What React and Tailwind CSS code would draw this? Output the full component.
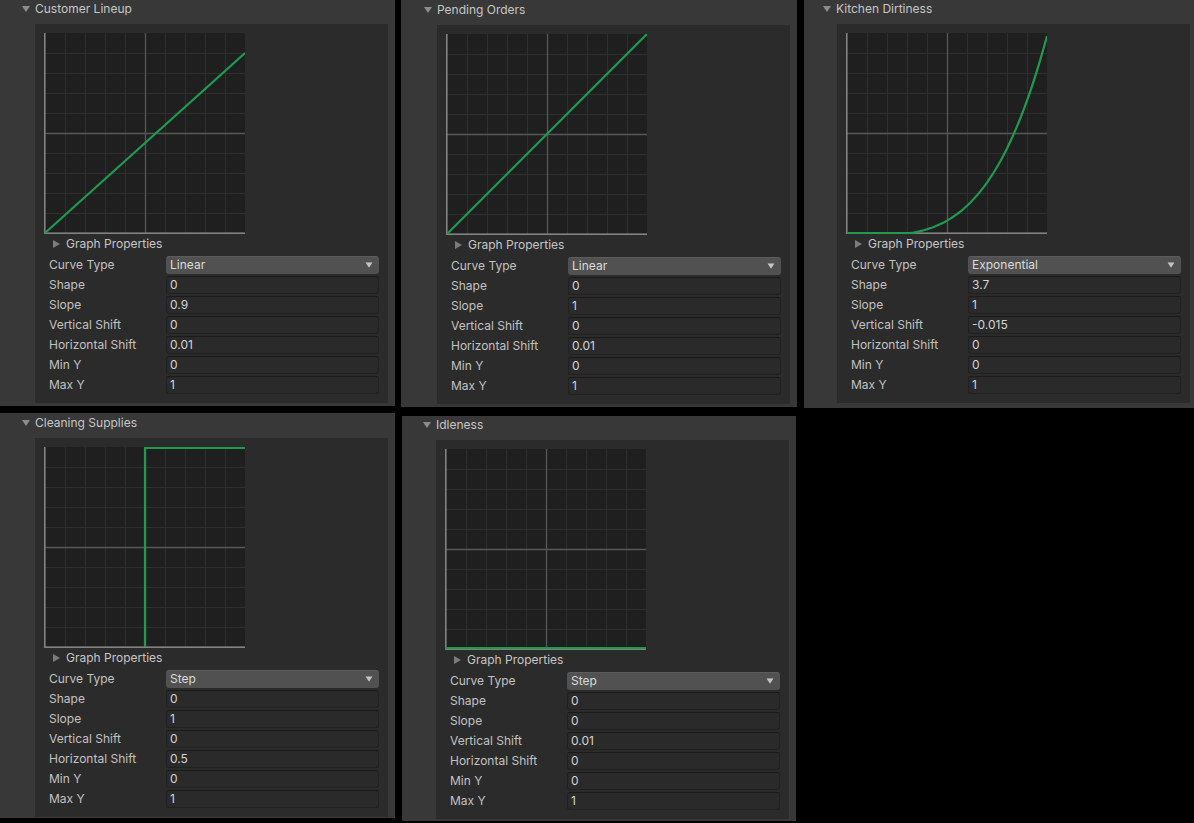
import React from "react";

const GRID = [20, 40, 60, 80, 120, 140, 160, 180];
const ROW_LABELS = ["Shape", "Slope", "Vertical Shift", "Horizontal Shift", "Min Y", "Max Y"];

// map curve space (0..1) to graph pixels
const px = (x) => 1 + x * 200;
const py = (y) => 200 - y * 200;

const expPath = () => {
  let d = "";
  for (let i = 0; i <= 60; i++) {
    const x = i / 60;
    const y = Math.min(1, Math.max(0, Math.pow(x, 3.7) - 0.015));
    d += (i === 0 ? "M" : "L") + px(x).toFixed(2) + "," + py(y).toFixed(2) + " ";
  }
  return d;
};

const panels = [
  {
    title: "Customer Lineup",
    curve: "Linear",
    values: ["0", "0.9", "0", "0.01", "0", "1"],
    path: `M${px(0)},${py(0)} L${px(1)},${py(0.9)}`,
  },
  {
    title: "Pending Orders",
    curve: "Linear",
    values: ["0", "1", "0", "0.01", "0", "1"],
    path: `M${px(0)},${py(0)} L${px(1)},${py(1)}`,
  },
  {
    title: "Kitchen Dirtiness",
    curve: "Exponential",
    values: ["3.7", "1", "-0.015", "0", "0", "1"],
    path: expPath(),
  },
  {
    title: "Cleaning Supplies",
    curve: "Step",
    values: ["0", "1", "0", "0.5", "0", "1"],
    path: `M${px(0.5)},200 L${px(0.5)},1 L201,1`,
  },
  {
    title: "Idleness",
    curve: "Step",
    values: ["0", "0", "0.01", "0", "0", "1"],
    path: `M0,199 L201,199`,
  },
];

const Graph = ({ path }) => (
  <svg width="201" height="201" viewBox="0 0 201 201" className="block">
    <rect x="0" y="0" width="201" height="201" fill="#1f1f1f" />
    {GRID.map((g) => (
      <line key={"v" + g} x1={g + 1.5} y1="0" x2={g + 1.5} y2="201" stroke="#2f2f2f" strokeWidth="1" />
    ))}
    {GRID.map((g) => (
      <line key={"h" + g} x1="0" y1={g + 0.5} x2="201" y2={g + 0.5} stroke="#2f2f2f" strokeWidth="1" />
    ))}
    <line x1="101.5" y1="0" x2="101.5" y2="201" stroke="#575757" strokeWidth="1.3" />
    <line x1="0" y1="100.5" x2="201" y2="100.5" stroke="#575757" strokeWidth="1.3" />
    <rect x="0" y="0" width="1.6" height="201" fill="#828282" />
    <rect x="0" y="199.4" width="201" height="1.6" fill="#828282" />
    <path d={path} fill="none" stroke="#1f9a4f" strokeWidth="2.2" strokeLinejoin="round" />
  </svg>
);

const DownTri = ({ className }) => (
  <svg width="8" height="6" viewBox="0 0 8 6" className={className}>
    <path d="M0,0 L8,0 L4,6 Z" fill="currentColor" />
  </svg>
);

const RightTri = () => (
  <svg width="7" height="8" viewBox="0 0 7 8" className="block">
    <path d="M0,0 L7,4 L0,8 Z" fill="#7c7c7c" />
  </svg>
);

const Panel = ({ data, width, height, headTop, headLeft, innerLeft, innerTop, className }) => (
  <div className={`bg-[#383838] shrink-0 flex flex-col ${width} ${height} ${className || ""}`}>
    <div className={`flex items-start ${headTop} ${headLeft} ${innerTop}`}>
      <DownTri className="text-[#8c8c8c] mr-[5px] mt-[5px] shrink-0" />
      <span className="text-[12px] leading-[16px] text-[#c6c6c6]">{data.title}</span>
    </div>
    <div className={`bg-[#2b2b2b] w-[353px] pt-[9px] pb-[8px] ${innerLeft}`}>
      <div className="pl-[9px]">
        <Graph path={data.path} />
      </div>
      <div className="h-[20px] flex items-center pl-[18px]">
        <RightTri />
        <span className="ml-[6px] text-[12px] text-[#c6c6c6]">Graph Properties</span>
      </div>
      <div className="grid grid-cols-[117px_1fr] pl-[14px] pr-[9px]">
        <div className="h-[21px] flex items-center text-[12px] text-[#c2c2c2]">Curve Type</div>
        <div className="h-[21px] flex items-center">
          <div className="w-full h-[18px] rounded-[3px] bg-[#515151] border-t border-[#5c5c5c] flex items-center justify-between pl-[4px] pr-[6px]">
            <span className="text-[12px] text-[#dadada]">{data.curve}</span>
            <DownTri className="text-[#c4c4c4] scale-90" />
          </div>
        </div>
        {ROW_LABELS.map((label, i) => (
          <React.Fragment key={label}>
            <div className="h-[20px] flex items-center text-[12px] text-[#c2c2c2]">{label}</div>
            <div className="h-[20px] flex items-center">
              <div className="w-full h-[18px] rounded-[3px] bg-[#2a2a2a] border border-[#212121] border-t-[#1a1a1a] flex items-center pl-[3px]">
                <span className="text-[12px] text-[#d4d4d4]">{data.values[i]}</span>
              </div>
            </div>
          </React.Fragment>
        ))}
      </div>
    </div>
  </div>
);

const App = () => {
  return (
    <div
      className="w-[1194px] h-[823px] bg-black overflow-hidden flex flex-col"
      style={{ fontFamily: "Inter, 'Noto Sans', sans-serif" }}
    >
      <div className="flex items-start h-[408px]">
        <Panel
          data={panels[0]}
          width="w-[395px]"
          height="h-[406px]"
          headTop="pt-[1px]"
          headLeft="pl-[22px]"
          innerLeft="ml-[35px]"
          innerTop="h-[24px]"
        />
        <Panel
          data={panels[1]}
          width="w-[396px]"
          height="h-[407px]"
          headTop="pt-[2px]"
          headLeft="pl-[23px]"
          innerLeft="ml-[36px]"
          innerTop="h-[25px]"
          className="ml-[6px]"
        />
        <Panel
          data={panels[2]}
          width="w-[390px]"
          height="h-[408px]"
          headTop="pt-[1px]"
          headLeft="pl-[19px]"
          innerLeft="ml-[33px]"
          innerTop="h-[24px]"
          className="ml-[7px]"
        />
      </div>
      <div className="flex items-start mt-[5px]">
        <Panel
          data={panels[3]}
          width="w-[395px]"
          height="h-[405px]"
          headTop="pt-[2px]"
          headLeft="pl-[22px]"
          innerLeft="ml-[35px]"
          innerTop="h-[25px]"
        />
        <Panel
          data={panels[4]}
          width="w-[394px]"
          height="h-[405px]"
          headTop="pt-[1px]"
          headLeft="pl-[21px]"
          innerLeft="ml-[34px]"
          innerTop="h-[24px]"
          className="ml-[7px] mt-[3px]"
        />
      </div>
    </div>
  );
};

export default App;
